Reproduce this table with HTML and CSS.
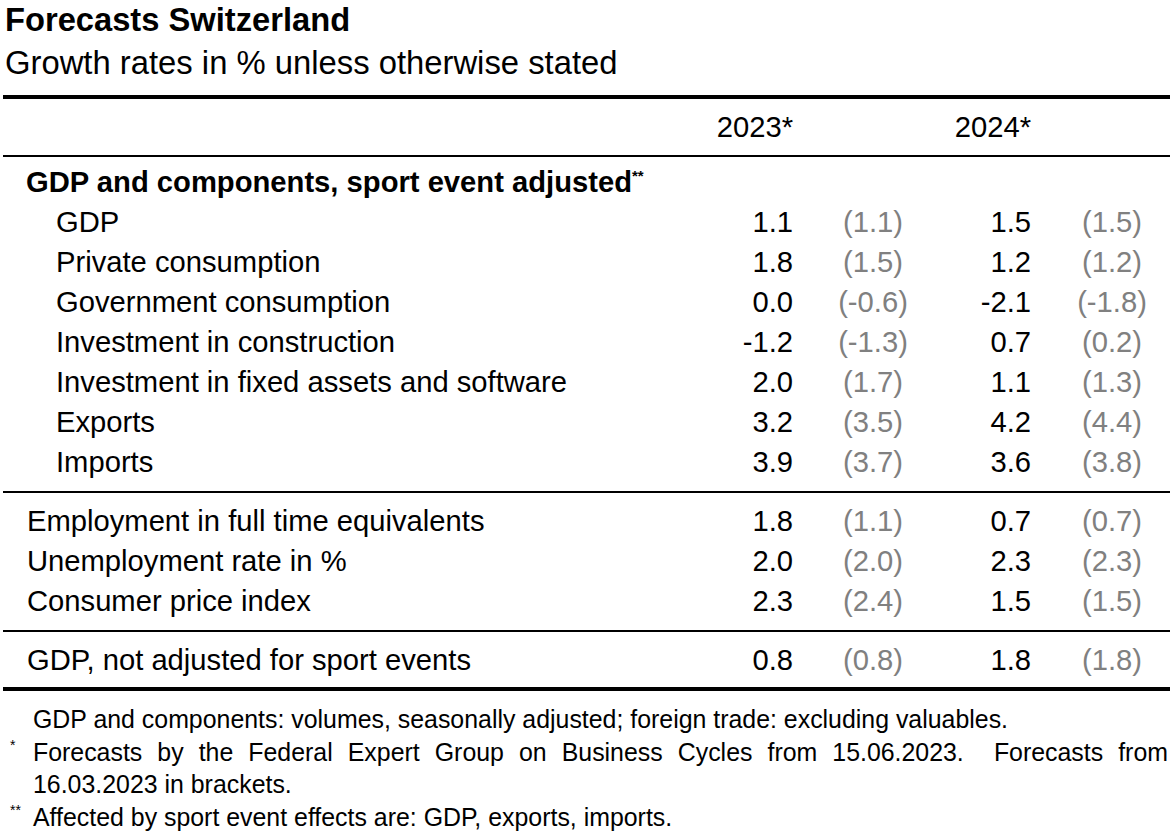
FILE: index.html
```html
<!DOCTYPE html>
<html lang="en">
<head>
<meta charset="utf-8">
<title>Forecasts Switzerland</title>
<link rel="stylesheet" href="styles.css">
</head>
<body>
<div class="page">
  <h1 class="title">Forecasts Switzerland</h1>
  <p class="subtitle">Growth rates in % unless otherwise stated</p>
  <div class="table">
    <div class="row head">
      <span class="label"></span>
      <span class="val">2023*</span>
      <span class="prev"></span>
      <span class="val">2024*</span>
      <span class="prev p24"></span>
    </div>
    <div class="section">
      <div class="row group"><span class="label">GDP and components, sport event adjusted<sup>**</sup></span></div>
      <div class="row sub"><span class="label">GDP</span><span class="val">1.1</span><span class="prev">(1.1)</span><span class="val">1.5</span><span class="prev p24">(1.5)</span></div>
      <div class="row sub"><span class="label">Private consumption</span><span class="val">1.8</span><span class="prev">(1.5)</span><span class="val">1.2</span><span class="prev p24">(1.2)</span></div>
      <div class="row sub"><span class="label">Government consumption</span><span class="val">0.0</span><span class="prev">(-0.6)</span><span class="val">-2.1</span><span class="prev p24">(-1.8)</span></div>
      <div class="row sub"><span class="label">Investment in construction</span><span class="val">-1.2</span><span class="prev">(-1.3)</span><span class="val">0.7</span><span class="prev p24">(0.2)</span></div>
      <div class="row sub"><span class="label">Investment in fixed assets and software</span><span class="val">2.0</span><span class="prev">(1.7)</span><span class="val">1.1</span><span class="prev p24">(1.3)</span></div>
      <div class="row sub"><span class="label">Exports</span><span class="val">3.2</span><span class="prev">(3.5)</span><span class="val">4.2</span><span class="prev p24">(4.4)</span></div>
      <div class="row sub"><span class="label">Imports</span><span class="val">3.9</span><span class="prev">(3.7)</span><span class="val">3.6</span><span class="prev p24">(3.8)</span></div>
    </div>
    <div class="section">
      <div class="row"><span class="label">Employment in full time equivalents</span><span class="val">1.8</span><span class="prev">(1.1)</span><span class="val">0.7</span><span class="prev p24">(0.7)</span></div>
      <div class="row"><span class="label">Unemployment rate in %</span><span class="val">2.0</span><span class="prev">(2.0)</span><span class="val">2.3</span><span class="prev p24">(2.3)</span></div>
      <div class="row"><span class="label">Consumer price index</span><span class="val">2.3</span><span class="prev">(2.4)</span><span class="val">1.5</span><span class="prev p24">(1.5)</span></div>
    </div>
    <div class="section last">
      <div class="row"><span class="label">GDP, not adjusted for sport events</span><span class="val">0.8</span><span class="prev">(0.8)</span><span class="val">1.8</span><span class="prev p24">(1.8)</span></div>
    </div>
  </div>
  <div class="notes">
    <span class="mark"></span>
    <p class="note">GDP and components: volumes, seasonally adjusted; foreign trade: excluding valuables.</p>
    <span class="mark">*</span>
    <p class="note justify">Forecasts by the Federal Expert Group on Business Cycles from 15.06.2023.&nbsp; Forecasts from 16.03.2023 in brackets.</p>
    <span class="mark">**</span>
    <p class="note">Affected by sport event effects are: GDP, exports, imports.</p>
  </div>
</div>
</body>
</html>
```

FILE: styles.css
```css
html, body {
  margin: 0;
  padding: 0;
  background: #ffffff;
}

body {
  font-family: "Liberation Sans", Arial, sans-serif;
  color: #000000;
}

.page {
  width: 1170px;
  padding-left: 3px;
  box-sizing: border-box;
}

.title {
  margin: 0;
  padding-left: 2px;
  font-size: 32.7px;
  font-weight: bold;
  line-height: 40px;
}

.subtitle {
  margin: 0;
  padding-left: 2px;
  font-size: 32.8px;
  line-height: 46px;
}

.table {
  margin-top: 9px;
  border-top: 4px solid #000;
  border-bottom: 4px solid #000;
}

.row {
  display: grid;
  grid-template-columns: 697px 93px 160px 78px 136px;
  align-items: center;
  height: 40px;
  font-size: 29.2px;
}

.row.head {
  height: 56px;
  border-bottom: 2px solid #000;
}

.label {
  white-space: nowrap;
  padding-left: 24px;
}

.sub .label {
  padding-left: 53px;
}

.group .label {
  font-weight: bold;
  padding-left: 23px;
}

.group sup {
  font-size: 15px;
  vertical-align: 11px;
  line-height: 0;
}

.val {
  text-align: right;
}

.prev {
  text-align: center;
  color: #808080;
}

.prev.p24 {
  padding-left: 26px;
}

.section {
  padding: 5px 0 9px;
  border-bottom: 2px solid #000;
}

.section + .section {
  padding-top: 8px;
}

.section.last {
  border-bottom: none;
  padding-top: 8px;
  padding-bottom: 7px;
}

.notes {
  display: grid;
  grid-template-columns: 30px 1135px;
  margin-top: 12px;
  font-size: 24.9px;
  line-height: 32.7px;
}

.mark {
  font-size: 14px;
  line-height: 14px;
  padding-left: 7px;
  padding-top: 2px;
}

.note {
  margin: 0;
}

.note.justify {
  text-align: justify;
}
```
